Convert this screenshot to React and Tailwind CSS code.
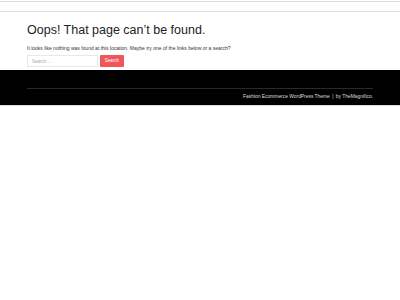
export default function App() {
  return (
    <div className="w-[400px] h-[300px] bg-white font-['Liberation_Sans',Arial,sans-serif] text-[#333]">
      {/* header strip */}
      <div className="h-[11px] border-t border-b border-[#dddddd] mt-px" />

      <main className="px-[27px] pt-[10px]">
        <h1 className="text-[12.5px] leading-[17px] text-[#222]">Oops! That page can’t be found.</h1>
        <p className="mt-[6px] text-[5px] leading-[7px] text-[#333]">
          It looks like nothing was found at this location. Maybe try one of the links below or a search?
        </p>
        <form className="mt-[3px] flex items-center gap-[2px] h-[12px] mb-[3px]" onSubmit={e => e.preventDefault()}>
          <input
            type="search"
            placeholder="Search …"
            className="w-[71px] h-[12px] border border-[#e8e8e8] px-[4px] text-[4.5px] text-[#999] placeholder:text-[#aaa] outline-none"
          />
          <button className="w-[24px] h-[12px] bg-[#f0555a] text-white text-[4.5px] rounded-[1px]">Search</button>
        </form>
      </main>

      <footer className="bg-black h-[35px] px-[27px] pt-[18px]">
        <div className="border-t border-[#2a2a2a] pt-[5px] flex justify-end">
          <span className="text-[4.9px] leading-[6px] text-[#ddd]">
            Fashion Ecommerce WordPress Theme <span className="mx-[1px]">|</span> by TheMagnifico.
          </span>
        </div>
      </footer>
      <div className="border-t border-[#dddddd]" />
    </div>
  )
}
